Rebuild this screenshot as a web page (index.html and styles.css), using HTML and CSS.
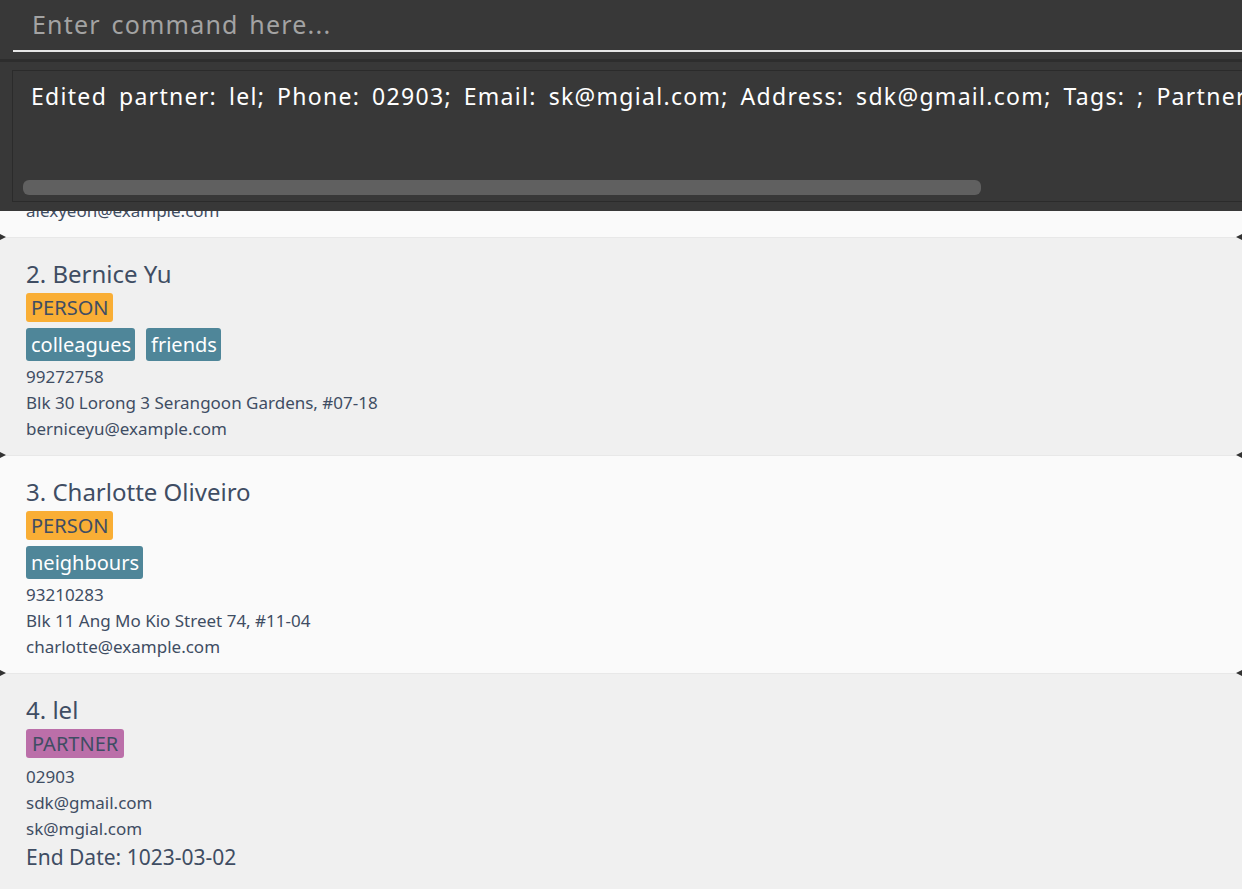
FILE: index.html
```html
<!DOCTYPE html>
<html>
<head>
<meta charset="utf-8">
<link rel="stylesheet" href="styles.css">
</head>
<body>
<div class="app">
  <div class="command-pane">
    <div class="command-field">Enter command here...</div>
  </div>
  <div class="pane-divider"></div>
  <div class="result-pane">
    <div class="result-box">
      <div class="result-text">Edited partner: lel; Phone: 02903; Email: sk@mgial.com; Address: sdk@gmail.com; Tags: ; Partnership End Date: 1023-03-02</div>
      <div class="hscroll"><div class="thumb"></div></div>
    </div>
  </div>
  <div class="list">
    <div class="list-inner">
      <div class="card light">
        <div class="name">1. Alex Yeoh</div>
        <div class="badges"><span class="badge person">PERSON</span></div>
        <div class="tags"><span class="tag">friends</span></div>
        <div class="line">87438807</div>
        <div class="line">Blk 30 Geylang Street 29, #06-40</div>
        <div class="line">alexyeoh@example.com</div>
      </div>
      <div class="card dark">
        <div class="name">2. Bernice Yu</div>
        <div class="badges"><span class="badge person">PERSON</span></div>
        <div class="tags"><span class="tag">colleagues</span><span class="tag">friends</span></div>
        <div class="line">99272758</div>
        <div class="line">Blk 30 Lorong 3 Serangoon Gardens, #07-18</div>
        <div class="line">berniceyu@example.com</div>
      </div>
      <div class="card light">
        <div class="name">3. Charlotte Oliveiro</div>
        <div class="badges"><span class="badge person">PERSON</span></div>
        <div class="tags"><span class="tag">neighbours</span></div>
        <div class="line">93210283</div>
        <div class="line">Blk 11 Ang Mo Kio Street 74, #11-04</div>
        <div class="line">charlotte@example.com</div>
      </div>
      <div class="card dark">
        <div class="name">4. lel</div>
        <div class="badges"><span class="badge partner">PARTNER</span></div>
        <div class="line">02903</div>
        <div class="line">sdk@gmail.com</div>
        <div class="line">sk@mgial.com</div>
        <div class="end-date">End Date: 1023-03-02</div>
      </div>
    </div>
  </div>
</div>
</body>
</html>
```

FILE: styles.css
```css
html, body {
  margin: 0;
  padding: 0;
  width: 1242px;
  height: 889px;
  overflow: hidden;
  background: #383838;
  font-family: "Noto Sans", "Open Sans", sans-serif;
}

.app {
  display: flex;
  flex-direction: column;
  height: 889px;
}

.command-pane {
  height: 59px;
  background: #383838;
  padding-left: 13px;
  box-sizing: border-box;
}

.command-field {
  height: 52px;
  box-sizing: border-box;
  border-bottom: 2px solid #e6e6e6;
  padding-left: 19px;
  padding-top: 6px;
  font-size: 25px;
  letter-spacing: 1.2px;
  word-spacing: 3px;
  color: #a3a3a3;
  line-height: 36px;
}

.pane-divider {
  height: 3px;
  background: #2d2d2d;
}

.result-pane {
  padding: 8px 0 9px 12px;
  background: #383838;
}

.result-box {
  height: 132px;
  box-sizing: border-box;
  border: 1px solid #2b2b2b;
  border-right: none;
  background: #383838;
  display: flex;
  flex-direction: column;
  overflow: hidden;
}

.result-text {
  white-space: nowrap;
  color: #ffffff;
  font-size: 23px;
  letter-spacing: 1.3px;
  word-spacing: 4.6px;
  line-height: 30px;
  padding: 10px 0 0 18px;
  flex: 1;
}

.hscroll {
  height: 15px;
  margin: 0 0 6px 10px;
}

.thumb {
  width: 958px;
  height: 15px;
  border-radius: 6px;
  background: #606060;
}

.list {
  flex: 1;
  overflow: hidden;
  background: #f0f0f0;
}

.list-inner {
  margin-top: -191px;
}

.card {
  position: relative;
  height: 218px;
  box-sizing: border-box;
  padding: 20px 0 0 26px;
  color: #3f4d63;
  border-bottom: 1px solid #e8e8e8;
}

.card.light { background: #fafafa; }
.card.dark { background: #f0f0f0; }

.card::before,
.card::after {
  content: "";
  position: absolute;
  top: -4px;
  width: 0;
  height: 0;
  border-top: 3px solid transparent;
  border-bottom: 3px solid transparent;
}

.card::before {
  left: 0;
  border-left: 6px solid #333;
}

.card::after {
  right: 0;
  border-right: 6px solid #333;
}

.name {
  font-size: 24px;
  line-height: 32px;
  height: 35px;
}

.badges {
  display: flex;
  height: 35px;
}

.badge {
  display: inline-block;
  height: 29px;
  line-height: 29px;
  font-size: 20px;
  padding: 0 5px;
  border-radius: 3px;
  color: #3f4d63;
}

.badge.person { background: #f9ae35; }
.badge.partner { background: #bb6fa9; padding: 0 6px; }

.tags {
  display: flex;
  gap: 11px;
  height: 36px;
}

.tag {
  height: 33px;
  line-height: 33px;
  font-size: 20px;
  padding: 0 4px 0 5px;
  border-radius: 3px;
  background: #4f8699;
  color: #ffffff;
}

.line {
  font-size: 17px;
  line-height: 26px;
}

.end-date {
  font-size: 21px;
  line-height: 30px;
}
```
